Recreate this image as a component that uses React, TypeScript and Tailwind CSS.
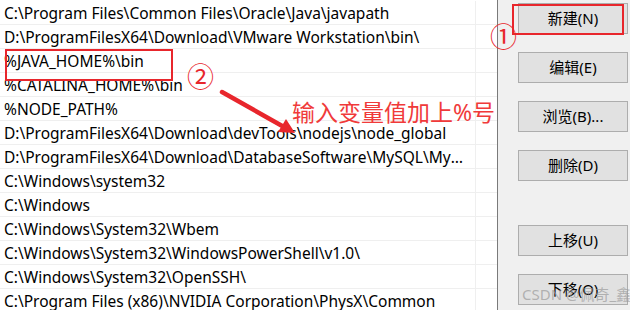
const paths = [
    "C:\\Program Files\\Common Files\\Oracle\\Java\\javapath",
    "D:\\ProgramFilesX64\\Download\\VMware Workstation\\bin\\",
    "%JAVA_HOME%\\bin",
    "%CATALINA_HOME%\\bin",
    "%NODE_PATH%",
    "D:\\ProgramFilesX64\\Download\\devTools\\nodejs\\node_global",
    "D:\\ProgramFilesX64\\Download\\DatabaseSoftware\\MySQL\\MySQL Server 8.0\\bin",
    "C:\\Windows\\system32",
    "C:\\Windows",
    "C:\\Windows\\System32\\Wbem",
    "C:\\Windows\\System32\\WindowsPowerShell\\v1.0\\",
    "C:\\Windows\\System32\\OpenSSH\\",
    "C:\\Program Files (x86)\\NVIDIA Corporation\\PhysX\\Common",
];

const font = { fontFamily: '"Noto Sans", "Noto Sans CJK SC", sans-serif' };

const WinButton = ({ label, className = "" }: { label: string; className?: string }) => (
    <button
        className={`w-[110px] h-[31px] bg-[#e1e1e1] border border-[#adadad] text-[15px] text-black flex items-center justify-center ${className}`}
    >
        {label}
    </button>
);

export default function App() {
    return (
        <div
            className="relative w-[630px] h-[310px] overflow-hidden flex bg-[#f0f0f0]"
            style={font}
        >
            {/* path list */}
            <div className="w-[498px] h-full bg-white border-r border-[#7a7a7a] pt-px">
                {paths.map((p) => (
                    <div key={p} className="flex h-6 border-b border-[#efefef]">
                        <div className="w-[476px] border-r border-[#efefef] pl-1 pr-1 pt-[2px] text-[15.5px] leading-[21px] text-black whitespace-nowrap overflow-hidden text-ellipsis">
                            {p}
                        </div>
                        <div className="flex-1" />
                    </div>
                ))}
            </div>

            {/* buttons */}
            <div className="flex-1 flex flex-col pl-5 pt-[3px] gap-[18px]">
                <WinButton label="新建(N)" />
                <WinButton label="编辑(E)" />
                <WinButton label="浏览(B)..." />
                <WinButton label="删除(D)" />
                <WinButton label="上移(U)" className="mt-[26px]" />
                <WinButton label="下移(O)" />
            </div>

            {/* annotations */}
            <div className="absolute left-[512px] top-[4px] w-[112px] h-[31px] border-2 border-[#e8262c]" />
            <div className="absolute left-[490px] top-[22px] text-[27px] leading-[30px] text-[#e8262c]">①</div>
            <div className="absolute left-[187px] top-[62px] text-[27px] leading-[30px] text-[#e8262c]">②</div>
            <div className="absolute left-[5px] top-[49px] w-[168px] h-[32px] border-2 border-[#e8262c]" />
            <svg className="absolute left-0 top-0" width="630" height="310">
                <line x1="222" y1="92" x2="284" y2="127" stroke="#e8262c" strokeWidth="4.5" strokeLinecap="round" />
                <polygon points="295,133 278,132 286,119" fill="#e8262c" />
            </svg>
            <div className="absolute left-[292px] top-[97px] text-[23px] leading-[30px] text-[#f03a3a] whitespace-nowrap">
                输入变量值加上%号
            </div>
            <div className="absolute left-[522px] top-[283px] text-[15px] text-[#9a9a9a]/70 whitespace-nowrap">
                CSDN @佩奇_鑫
            </div>
        </div>
    );
}
